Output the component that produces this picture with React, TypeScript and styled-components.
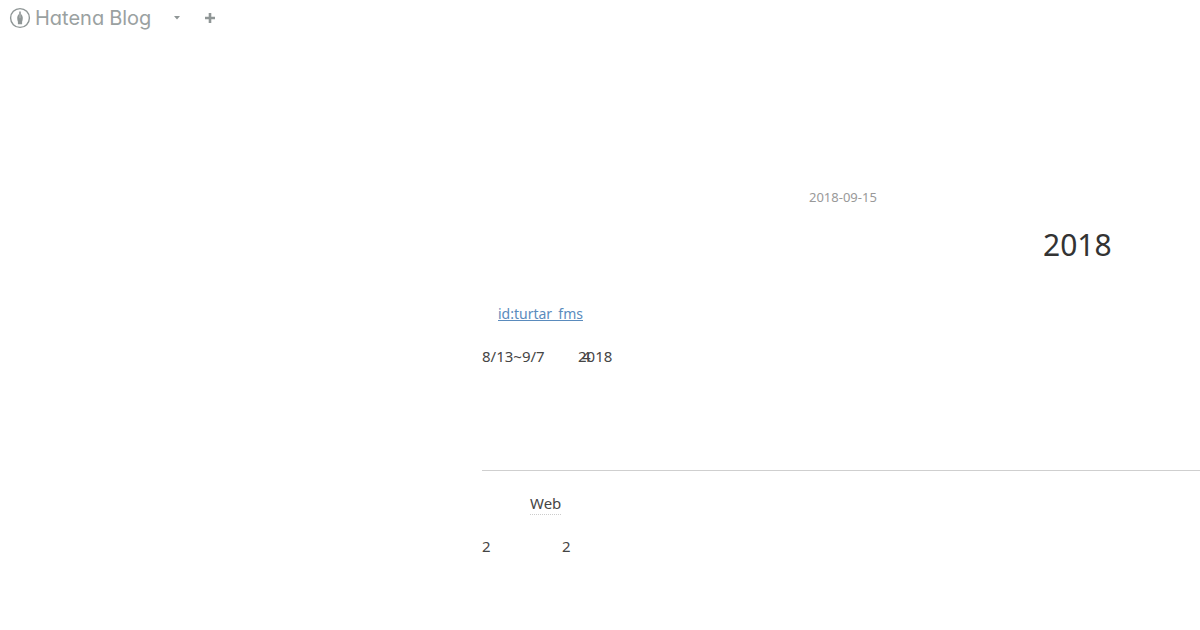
import React from "react";
import styled, { createGlobalStyle } from "styled-components";

const GlobalStyle = createGlobalStyle`
  * { box-sizing: border-box; }
  body {
    margin: 0;
    background: #fff;
    color: #454545;
    font-family: "Noto Sans", "Noto Sans CJK JP", sans-serif;
    font-size: 15px;
    line-height: 27px;
    overflow-x: hidden;
  }
`;

const GlobalHeader = styled.header`
  display: flex;
  align-items: center;
  height: 36px;
  padding-left: 9px;
  color: #8f9696;
`;

const Logo = styled.a`
  display: flex;
  align-items: center;
  gap: 4px;
  width: 143px;
  color: inherit;
  text-decoration: none;
`;

const LogoMark = styled.svg`
  flex: none;
`;

const Wordmark = styled.span`
  display: flex;
  gap: 5px;
  font-family: Inter, sans-serif;
  font-size: 20px;
  font-weight: 400;
  font-feature-settings: "cv11";
  line-height: 36px;
  color: #9aa1a1;
`;

const HeaderButton = styled.button`
  display: flex;
  align-items: center;
  justify-content: center;
  width: 33px;
  height: 36px;
  padding: 0;
  border: 0;
  background: none;
  color: inherit;

  &:first-of-type {
    margin-left: 8px;
  }
`;

const Entry = styled.main`
  margin-left: 482px;
  padding-top: 148px;
`;

const EntryDate = styled.a`
  display: block;
  padding-left: 327px;
  color: #999;
  font-size: 13px;
  text-decoration: none;
`;

const Title = styled.h1`
  margin: 12px 0 0;
  padding-left: 561px;
  color: #333;
  font-size: 30px;
  font-weight: 400;
  line-height: 44px;
`;

const Body = styled.div`
  margin-top: 33px;
`;

const Paragraph = styled.p<{ $indent?: number }>`
  display: flex;
  height: 27px;
  margin: 0 0 16px;
  padding-left: ${(p) => p.$indent ?? 0}px;
`;

const UserLink = styled.a`
  color: #5a8bbd;
  font-size: 14px;
  text-decoration: underline;
`;

const Cell = styled.span<{ $width: number }>`
  width: ${(p) => p.$width}px;
`;

const Stacked = styled.span`
  position: relative;
`;

const Over = styled.span`
  position: absolute;
  top: 0;
  left: 4px;
`;

const Rule = styled.hr`
  height: 1px;
  margin: 100px 0 19px;
  border: 0;
  background: #cfcfcf;
`;

const Keyword = styled.a`
  height: 25px;
  border-bottom: 1px dotted #ccc;
  color: inherit;
  text-decoration: none;
`;

export default function App() {
  return (
    <>
      <GlobalStyle />
      <GlobalHeader>
        <Logo href="#" aria-label="Hatena Blog">
          <LogoMark width="22" height="22" viewBox="0 0 22 22" aria-hidden="true">
            <circle cx="11" cy="11" r="9.4" fill="none" stroke="currentColor" strokeWidth="1.4" />
            <path d="M10.2 4.6h1.6v2.2c1.3 1.3 2 2.7 2 4.3 0 1.5-.3 2.6-.7 3.7v2.4H8.9v-2.4c-.4-1.1-.7-2.2-.7-3.7 0-1.6.7-3 2-4.3z" fill="currentColor" />
            <path d="M11 7.2v4" stroke="#fff" strokeWidth=".4" />
          </LogoMark>
          <Wordmark>
            <span>Hatena</span>
            <span>Blog</span>
          </Wordmark>
        </Logo>
        <HeaderButton type="button" aria-label="Menu">
          <svg width="6" height="4" viewBox="0 0 6 4">
            <path d="M0 0h6L3 3.5z" fill="currentColor" />
          </svg>
        </HeaderButton>
        <HeaderButton type="button" aria-label="Subscribe">
          <svg width="10" height="10" viewBox="0 0 10 10">
            <path d="M3.7 0h2.6v3.7H10v2.6H6.3V10H3.7V6.3H0V3.7h3.7z" fill="currentColor" />
          </svg>
        </HeaderButton>
      </GlobalHeader>
      <Entry>
        <EntryDate href="#">
          <time dateTime="2018-09-15">2018-09-15</time>
        </EntryDate>
        <Title>2018</Title>
        <Body>
          <Paragraph $indent={16}>
            <UserLink href="#">id:turtar_fms</UserLink>
          </Paragraph>
          <Paragraph>
            <Cell $width={96}>8/13~9/7</Cell>
            <Stacked>
              2018
              <Over>4</Over>
            </Stacked>
          </Paragraph>
          <Rule />
          <Paragraph $indent={48}>
            <Keyword href="#">Web</Keyword>
          </Paragraph>
          <Paragraph>
            <Cell $width={80}>2</Cell>
            <span>2</span>
          </Paragraph>
        </Body>
      </Entry>
    </>
  );
}
